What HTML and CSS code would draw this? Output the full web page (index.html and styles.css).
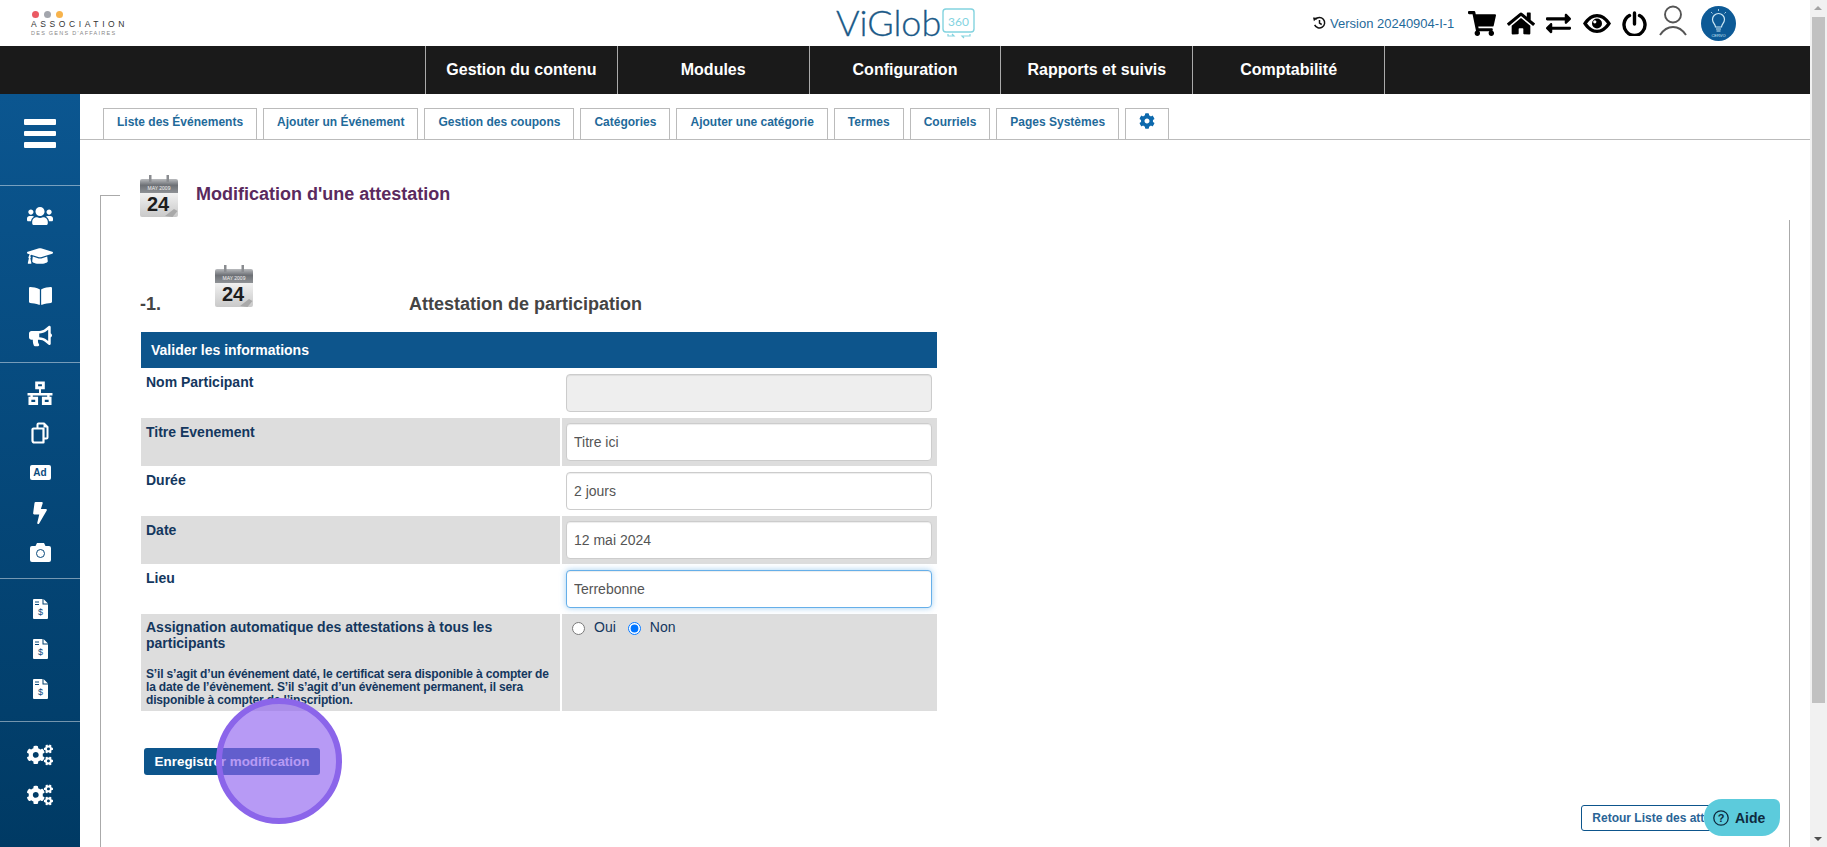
FILE: index.html
```html
<!DOCTYPE html>
<html lang="fr">
<head>
    <meta charset="UTF-8">
    <meta name="viewport" content="width=device-width, initial-scale=1.0">
    <title>Modification d'une attestation - ViGlob 360</title>
    <link rel="stylesheet" href="styles.css">
</head>
<body>

    <!-- Icon set -->
    <svg class="icon-defs" xmlns="http://www.w3.org/2000/svg">
        <defs>
            <linearGradient id="cal-head" x1="0" y1="0" x2="0" y2="1">
                <stop offset="0" stop-color="#b9bbbe"/>
                <stop offset=".45" stop-color="#6d7075"/>
                <stop offset="1" stop-color="#8f9296"/>
            </linearGradient>
            <linearGradient id="cal-body" x1="0" y1="0" x2="0" y2="1">
                <stop offset="0" stop-color="#f6f6f6"/>
                <stop offset="1" stop-color="#c9c9c9"/>
            </linearGradient>
        </defs>
        <symbol id="i-cart" viewBox="0 0 576 512"><path d="M528.12 301.319l47.273-208C578.806 78.301 567.391 64 551.99 64H159.208l-9.166-44.81C147.758 8.021 137.93 0 126.529 0H24C10.745 0 0 10.745 0 24v16c0 13.255 10.745 24 24 24h69.883l70.248 343.435C147.325 417.1 136 435.222 136 456c0 30.928 25.072 56 56 56s56-25.072 56-56c0-15.674-6.447-29.835-16.824-40h209.647C430.447 426.165 424 440.326 424 456c0 30.928 25.072 56 56 56s56-25.072 56-56c0-22.172-12.888-41.332-31.579-50.405l5.517-24.276c3.413-15.018-8.002-29.319-23.403-29.319H218.117l-6.545-32h293.145c11.206 0 20.92-7.754 23.403-18.681z"/></symbol>
        <symbol id="i-home" viewBox="0 0 576 512"><path d="M280.37 148.26L96 300.11V464a16 16 0 0 0 16 16l112.06-.29a16 16 0 0 0 15.92-16V368a16 16 0 0 1 16-16h64a16 16 0 0 1 16 16v95.64a16 16 0 0 0 16 16.05L464 480a16 16 0 0 0 16-16V300L295.67 148.26a12.19 12.19 0 0 0-15.3 0zM571.6 251.47L488 182.56V44.05a12 12 0 0 0-12-12h-56a12 12 0 0 0-12 12v72.61L318.47 43a48 48 0 0 0-61 0L4.34 251.47a12 12 0 0 0-1.6 16.9l25.5 31A12 12 0 0 0 45.15 301l235.22-193.74a12.19 12.19 0 0 1 15.3 0L530.9 301a12 12 0 0 0 16.9-1.6l25.5-31a12 12 0 0 0-1.7-16.93z"/></symbol>
        <symbol id="i-exchange" viewBox="0 0 512 512"><path d="M0 168v-16c0-13.255 10.745-24 24-24h360V80c0-21.367 25.899-32.042 40.971-16.971l80 80c9.372 9.373 9.372 24.569 0 33.941l-80 80C409.956 271.982 384 261.456 384 240v-48H24c-13.255 0-24-10.745-24-24zm488 152H128v-48c0-21.314-25.862-32.08-40.971-16.971l-80 80c-9.372 9.373-9.372 24.569 0 33.941l80 80C102.057 463.997 128 453.437 128 432v-48h360c13.255 0 24-10.745 24-24v-16c0-13.255-10.745-24-24-24z"/></symbol>
        <symbol id="i-users" viewBox="0 0 640 512"><path d="M96 224c35.3 0 64-28.7 64-64s-28.7-64-64-64-64 28.7-64 64 28.7 64 64 64zm448 0c35.3 0 64-28.7 64-64s-28.7-64-64-64-64 28.7-64 64 28.7 64 64 64zm32 32h-64c-17.6 0-33.5 7.1-45.1 18.6 40.3 22.1 68.9 62 75.1 109.4h66c17.7 0 32-14.3 32-32v-32c0-35.3-28.7-64-64-64zm-256 0c61.9 0 112-50.1 112-112S381.9 32 320 32 208 82.1 208 144s50.1 112 112 112zm76.8 32h-8.3c-20.8 10-43.9 16-68.5 16s-47.6-6-68.5-16h-8.3C179.6 288 128 339.6 128 403.2V432c0 26.5 21.5 48 48 48h288c26.5 0 48-21.5 48-48v-28.8c0-63.6-51.6-115.2-115.2-115.2zm-223.7-13.4C161.5 263.1 145.6 256 128 256H64c-35.3 0-64 28.7-64 64v32c0 17.7 14.3 32 32 32h65.9c6.3-47.4 34.9-87.3 75.2-109.4z"/></symbol>
        <symbol id="i-cap" viewBox="0 0 640 512"><path d="M622.34 153.2L343.4 67.5c-15.2-4.67-31.6-4.67-46.79 0L17.66 153.2c-23.54 7.23-23.54 38.36 0 45.59l48.63 14.94c-10.67 13.19-17.23 29.28-17.88 46.9C38.78 266.15 32 276.11 32 288c0 10.78 5.68 19.85 13.86 25.65L20.33 428.53C18.11 438.52 25.71 448 35.94 448h56.11c10.24 0 17.84-9.48 15.62-19.47L82.14 313.65C90.32 307.85 96 298.78 96 288c0-11.57-6.47-21.25-15.66-26.87.76-15.02 8.44-28.3 20.69-36.72L296.6 284.5c9.06 2.78 26.44 6.25 46.79 0l278.95-85.7c23.55-7.24 23.55-38.36 0-45.6zM352.79 315.09c-28.53 8.76-52.84 3.92-65.59 0l-145.02-44.55L128 384c0 35.35 85.96 64 192 64s192-28.65 192-64l-14.18-113.47-145.03 44.56z"/></symbol>
        <symbol id="i-book" viewBox="0 0 576 512"><path d="M542.22 32.05c-54.8 3.11-163.72 14.43-230.96 55.59-4.64 2.84-7.27 7.89-7.27 13.17v363.87c0 11.55 12.63 18.85 23.28 13.49 69.18-34.82 169.23-44.32 218.7-46.92 16.89-.89 30.02-14.43 30.02-30.66V62.75c.01-17.71-15.35-31.74-33.77-30.7zM264.73 87.64C197.5 46.48 88.58 35.17 33.78 32.05 15.36 31.01 0 45.04 0 62.75V400.6c0 16.24 13.13 29.78 30.02 30.66 49.49 2.6 149.59 12.11 218.77 46.95 10.62 5.35 23.21-1.94 23.21-13.46V100.63c0-5.29-2.62-10.14-7.27-12.99z"/></symbol>
        <symbol id="i-bullhorn" viewBox="0 0 576 512"><path d="M576 240c0-23.63-12.95-44.04-32-55.12V32.01C544 23.26 537.02 0 512 0c-7.12 0-14.19 2.38-19.98 7.02l-85.03 68.03C364.28 109.19 310.66 128 256 128H64c-35.35 0-64 28.65-64 64v96c0 35.35 28.65 64 64 64h33.7c-1.39 10.48-2.18 21.14-2.18 32 0 39.77 9.26 77.35 25.56 110.94 5.19 10.69 16.52 17.06 28.4 17.06h74.28c26.05 0 41.69-29.84 25.9-50.56-16.4-21.52-26.15-48.36-26.15-77.44 0-11.11 1.62-21.79 4.41-32H256c54.66 0 108.28 18.81 150.98 52.95l85.03 68.03a32.023 32.023 0 0 0 19.98 7.02c24.92 0 32-22.78 32-32V295.13C563.05 284.04 576 263.63 576 240zm-96 141.42l-33.05-26.44C392.95 311.78 325.12 288 256 288v-96c69.12 0 136.95-23.78 190.95-66.98L480 98.58v282.84z"/></symbol>
        <symbol id="i-bolt" viewBox="0 0 320 512"><path d="M296 160H180.6l42.6-129.8C227.2 15 215.7 0 200 0H56C44 0 33.8 8.9 32.2 20.8l-32 240C-1.7 275.2 9.5 288 24 288h118.7L96.6 482.5c-3.6 15.2 8 29.5 23.3 29.5 8.4 0 16.4-4.4 20.8-12l176-304c9.3-15.9-2.2-36-20.7-36z"/></symbol>
        <symbol id="i-cogs" viewBox="0 0 640 512"><path d="M512.1 191l-8.2 14.3c-3 5.3-9.4 7.5-15.1 5.4-11.8-4.4-22.6-10.7-32.1-18.6-4.6-3.8-5.8-10.5-2.8-15.7l8.2-14.3c-6.9-8-12.3-17.3-15.9-27.4h-16.5c-6 0-11.2-4.3-12.2-10.3-2-12-2.1-24.6 0-37.1 1-6 6.2-10.4 12.2-10.4h16.5c3.6-10.1 9-19.4 15.9-27.4l-8.2-14.3c-3-5.2-1.9-11.9 2.8-15.7 9.5-7.9 20.4-14.2 32.1-18.6 5.7-2.1 12.1.1 15.1 5.4l8.2 14.3c10.5-1.9 21.2-1.9 31.7 0L552 6.3c3-5.3 9.4-7.5 15.1-5.4 11.8 4.4 22.6 10.7 32.1 18.6 4.6 3.8 5.8 10.5 2.8 15.7l-8.2 14.3c6.9 8 12.3 17.3 15.9 27.4h16.5c6 0 11.2 4.3 12.2 10.3 2 12 2.1 24.6 0 37.1-1 6-6.2 10.4-12.2 10.4h-16.5c-3.6 10.1-9 19.4-15.9 27.4l8.2 14.3c3 5.2 1.9 11.9-2.8 15.7-9.5 7.9-20.4 14.2-32.1 18.6-5.7 2.1-12.1-.1-15.1-5.4l-8.2-14.3c-10.4 1.9-21.2 1.9-31.7 0zm-10.5-58.8c38.5 29.6 82.4-14.3 52.8-52.8-38.5-29.7-82.4 14.3-52.8 52.8zM386.3 286.1l33.7 16.8c10.1 5.8 14.5 18.1 10.5 29.1-8.9 24.2-26.4 46.4-42.6 65.8-7.4 8.9-20.2 11.1-30.3 5.3l-29.1-16.8c-16 13.7-34.6 24.6-54.9 31.7v33.6c0 11.6-8.3 21.6-19.7 23.6-24.6 4.2-50.4 4.4-75.9 0-11.5-2-20-11.9-20-23.6V418c-20.3-7.2-38.9-18-54.9-31.7L74 403c-10 5.8-22.9 3.6-30.3-5.3-16.2-19.4-33.3-41.6-42.2-65.7-4-10.9.4-23.2 10.5-29.1l33.3-16.8c-3.9-20.9-3.9-42.4 0-63.4L12 205.8c-10.1-5.8-14.6-18.1-10.5-29 8.9-24.2 26-46.4 42.2-65.8 7.4-8.9 20.2-11.1 30.3-5.3l29.1 16.8c16-13.7 34.6-24.6 54.9-31.7V57.1c0-11.5 8.2-21.5 19.6-23.5 24.6-4.2 50.5-4.4 76-.1 11.5 2 20 11.9 20 23.6v33.6c20.3 7.2 38.9 18 54.9 31.7l29.1-16.8c10-5.8 22.9-3.6 30.3 5.3 16.2 19.4 33.2 41.6 42.1 65.8 4 10.9.1 23.2-10 29.1l-33.7 16.8c3.9 21 3.9 42.5 0 63.5zm-117.6 21.1c59.2-77-28.7-164.9-105.7-105.7-59.2 77 28.7 164.9 105.7 105.7zm243.4 182.7l-8.2 14.3c-3 5.3-9.4 7.5-15.1 5.4-11.8-4.4-22.6-10.7-32.1-18.6-4.6-3.8-5.8-10.5-2.8-15.7l8.2-14.3c-6.9-8-12.3-17.3-15.9-27.4h-16.5c-6 0-11.2-4.3-12.2-10.3-2-12-2.1-24.6 0-37.1 1-6 6.2-10.4 12.2-10.4h16.5c3.6-10.1 9-19.4 15.9-27.4l-8.2-14.3c-3-5.2-1.9-11.9 2.8-15.7 9.5-7.9 20.4-14.2 32.1-18.6 5.7-2.1 12.1.1 15.1 5.4l8.2 14.3c10.5-1.9 21.2-1.9 31.7 0l8.2-14.3c3-5.3 9.4-7.5 15.1-5.4 11.8 4.4 22.6 10.7 32.1 18.6 4.6 3.8 5.8 10.5 2.8 15.7l-8.2 14.3c6.9 8 12.3 17.3 15.9 27.4h16.5c6 0 11.2 4.3 12.2 10.3 2 12 2.1 24.6 0 37.1-1 6-6.2 10.4-12.2 10.4h-16.5c-3.6 10.1-9 19.4-15.9 27.4l8.2 14.3c3 5.2 1.9 11.9-2.8 15.7-9.5 7.9-20.4 14.2-32.1 18.6-5.7 2.1-12.1-.1-15.1-5.4l-8.2-14.3c-10.4 1.9-21.2 1.9-31.7 0zM501.6 431c38.5 29.6 82.4-14.3 52.8-52.8-38.5-29.6-82.4 14.3-52.8 52.8z"/></symbol>
        <symbol id="i-cog" viewBox="0 0 512 512"><path d="M487.4 315.7l-42.6-24.6c4.3-23.2 4.3-47 0-70.2l42.6-24.6c4.9-2.8 7.1-8.6 5.5-14-11.1-35.6-30-67.8-54.7-94.6-3.8-4.1-10-5.1-14.8-2.3L380.8 110c-17.9-15.4-38.5-27.3-60.8-35.1V25.8c0-5.6-3.9-10.5-9.4-11.7-36.7-8.2-74.3-7.8-109.2 0-5.5 1.2-9.4 6.1-9.4 11.7V75c-22.2 7.9-42.8 19.8-60.8 35.1L88.7 85.5c-4.9-2.8-11-1.9-14.8 2.3-24.7 26.7-43.6 58.9-54.7 94.6-1.7 5.4.6 11.2 5.5 14L67.3 221c-4.3 23.2-4.3 47 0 70.2l-42.6 24.6c-4.9 2.8-7.1 8.6-5.5 14 11.1 35.6 30 67.8 54.7 94.6 3.8 4.1 10 5.1 14.8 2.3l42.6-24.6c17.9 15.4 38.5 27.3 60.8 35.1v49.2c0 5.6 3.9 10.5 9.4 11.7 36.7 8.2 74.3 7.8 109.2 0 5.5-1.2 9.4-6.1 9.4-11.7v-49.2c22.2-7.9 42.8-19.8 60.8-35.1l42.6 24.6c4.9 2.8 11 1.9 14.8-2.3 24.7-26.7 43.6-58.9 54.7-94.6 1.5-5.5-.7-11.3-5.6-14.1zM256 336c-44.1 0-80-35.9-80-80s35.9-80 80-80 80 35.9 80 80-35.9 80-80 80z"/></symbol>
        <symbol id="i-sitemap" viewBox="0 0 26 25">
            <path fill="none" stroke="currentColor" stroke-width="3" d="M9.500 2h7v5h-7zM2.500 18h7v5.500h-7zM16.500 18h7v5.500h-7z"/>
            <path d="M12 8h2v4.500h12v2.500H0v-2.500h12z"/>
            <path d="M3 14h2.500v3H3zM20.500 14H23v3h-2.500z"/>
        </symbol>
        <symbol id="i-copy" viewBox="0 0 18 22">
            <path fill="none" stroke="currentColor" stroke-width="2" stroke-linejoin="round" d="M6.500 6V2.500a1 1 0 0 1 1-1h5.500l3.500 3.500v10.500a1 1 0 0 1-1 1h-3"/>
            <path d="M12.500 1l4.500 4.500h-4.500z"/>
            <path fill="none" stroke="currentColor" stroke-width="2.200" stroke-linejoin="round" d="M2.500 6.500H12.500V20.500H3.500a2 2 0 0 1-2-2V7.500a1 1 0 0 1 1-1z"/>
        </symbol>
        <symbol id="i-camera" viewBox="0 0 21 19">
            <path d="M7 0h7l1.500 3H19a2 2 0 0 1 2 2v12a2 2 0 0 1-2 2H2a2 2 0 0 1-2-2V5a2 2 0 0 1 2-2h3.500z"/>
            <circle cx="10.500" cy="10.500" r="4" fill="none" stroke="#0a4a7c" stroke-width="1"/>
        </symbol>
        <symbol id="i-invoice" viewBox="0 0 15 20">
            <path d="M1 0h8.500v5.500H15V19a1 1 0 0 1-1 1H1a1 1 0 0 1-1-1V1a1 1 0 0 1 1-1zM10.500 0L15 4.500h-4.500z"/>
            <path fill="none" stroke="#0a4a7c" d="M2 3h4M2 5.500h4"/>
        </symbol>
        <symbol id="i-calendar" viewBox="0 0 38 42">
            <path fill="url(#cal-body)" d="M0 15h38v25a2 2 0 0 1-2 2H2a2 2 0 0 1-2-2z"/>
            <path fill="url(#cal-head)" d="M0 6a2 2 0 0 1 2-2h34a2 2 0 0 1 2 2v12H0z"/>
            <path fill="#8a8c90" d="M9 0h2.500v7H9zM26.500 0H29v7h-2.500z"/>
            <path fill="#a9a9a9" d="M25 41l9-7 3.500 2-5 6z"/>
        </symbol>
    </svg>

    <div class="page">
        <header class="topbar">
            <div class="assoc-logo">
                <div class="assoc-dots"><span class="dot-red"></span><span class="dot-grey"></span><span class="dot-orange"></span></div>
                <div class="assoc-name">ASSOCIATION</div>
                <div class="assoc-sub">DES GENS D'AFFAIRES</div>
            </div>

            <div class="viglob-logo">
                <span class="viglob-name">ViGlob</span>
                <svg class="viglob-box" viewBox="0 0 33 32">
                    <rect x="1" y="1" width="31" height="23" rx="3" fill="none" stroke="#83d3df" stroke-width="1.400"/>
                    <text x="16.500" y="18" text-anchor="middle" class="viglob-360">360</text>
                    <path fill="none" stroke="#83d3df" stroke-width="1.200" d="M6 26v2h6l-2-2M28 26v2h-8l2 2"/>
                </svg>
            </div>

            <div class="top-tools">
                <svg class="history" viewBox="0 0 14 14"><path fill="none" stroke="#111" stroke-width="1.600" d="M2.600 3.200A5.600 5.600 0 1 1 1.800 9M7 3.800V7.200L9.400 8.600"/><path fill="#111" d="M0 1l4.600.4L1 5z"/></svg>
                <span class="version">Version 20240904-I-1</span>
                <svg class="tool tool-cart"><use href="#i-cart"/></svg>
                <svg class="tool tool-home"><use href="#i-home"/></svg>
                <svg class="tool tool-exchange"><use href="#i-exchange"/></svg>
                <svg class="tool tool-eye" viewBox="0 0 28 19"><path fill-rule="evenodd" d="M0 9.500C4 3 9 0 14 0s10 3 14 9.500C24 16 19 19 14 19S4 16 0 9.500zM4 9.500C7 13.800 10.500 15.800 14 15.800S21 13.800 24 9.500C21 5.200 17.500 3.200 14 3.200S7 5.200 4 9.500z"/><circle cx="14" cy="9.500" r="5"/><circle cx="11.800" cy="7.800" r="1.600" fill="#fff"/></svg>
                <svg class="tool tool-power" viewBox="0 0 25 25"><path fill="none" stroke="#000" stroke-width="3.400" stroke-linecap="round" d="M7.500 4.600a10.500 10.500 0 1 0 10 0M12.500 2v11"/></svg>
                <svg class="tool tool-user" viewBox="0 0 28 31"><circle cx="14" cy="9.500" r="8" fill="none" stroke="#555" stroke-width="1.900"/><path fill="none" stroke="#555" stroke-width="1.900" d="M1 30c4-6 8-8 13-8s9 2 13 8"/></svg>
                <svg class="avatar" viewBox="0 0 35 35">
                    <circle cx="17.500" cy="17.500" r="17.500" fill="#0d5a96"/>
                    <path fill="none" stroke="#cfe9f5" stroke-width="1.200" d="M14.500 21c0-3-3-4-3-7.500a6 6 0 0 1 12 0c0 3.500-3 4.500-3 7.500zM15 23h5M15.500 25h4"/>
                    <path fill="none" stroke="#cfe9f5" stroke-width=".8" d="M17.500 3v2M10 6l1.500 1.500M25 6l-1.500 1.500"/>
                    <text x="17.500" y="31" text-anchor="middle" class="avatar-text">CERVO</text>
                </svg>
            </div>
        </header>

        <nav class="main-nav">
            <a href="#">Gestion du contenu</a>
            <a href="#">Modules</a>
            <a href="#">Configuration</a>
            <a href="#">Rapports et suivis</a>
            <a href="#">Comptabilité</a>
        </nav>

        <div class="layout">
            <aside class="sidebar">
                <div class="side-group side-menu">
                    <div class="burger"><span></span><span></span><span></span></div>
                </div>
                <div class="side-group group-a">
                    <a class="side-icon" href="#"><svg class="w26"><use href="#i-users"/></svg></a>
                    <a class="side-icon" href="#"><svg class="w26"><use href="#i-cap"/></svg></a>
                    <a class="side-icon" href="#"><svg class="w24"><use href="#i-book"/></svg></a>
                    <a class="side-icon" href="#"><svg class="w24"><use href="#i-bullhorn"/></svg></a>
                </div>
                <div class="side-group group-b">
                    <a class="side-icon" href="#"><svg class="w26"><use href="#i-sitemap"/></svg></a>
                    <a class="side-icon" href="#"><svg class="w18"><use href="#i-copy"/></svg></a>
                    <a class="side-icon" href="#"><span class="ad-badge">Ad</span></a>
                    <a class="side-icon" href="#"><svg class="w14"><use href="#i-bolt"/></svg></a>
                    <a class="side-icon" href="#"><svg class="w21"><use href="#i-camera"/></svg></a>
                </div>
                <div class="side-group group-c">
                    <a class="side-icon" href="#"><svg class="w15" viewBox="0 0 15 20"><use href="#i-invoice"/><text x="7.500" y="15.500" text-anchor="middle" class="invoice-sign">$</text></svg></a>
                    <a class="side-icon" href="#"><svg class="w15" viewBox="0 0 15 20"><use href="#i-invoice"/><text x="7.500" y="15.500" text-anchor="middle" class="invoice-sign">$</text></svg></a>
                    <a class="side-icon" href="#"><svg class="w15" viewBox="0 0 15 20"><use href="#i-invoice"/><text x="7.500" y="15.500" text-anchor="middle" class="invoice-sign">$</text></svg></a>
                </div>
                <div class="side-group group-d">
                    <a class="side-icon" href="#"><svg class="w26"><use href="#i-cogs"/></svg></a>
                    <a class="side-icon" href="#"><svg class="w26"><use href="#i-cogs"/></svg></a>
                </div>
            </aside>

            <main class="content">
                <div class="tabs">
                    <a class="tab" href="#">Liste des Événements</a>
                    <a class="tab" href="#">Ajouter un Événement</a>
                    <a class="tab" href="#">Gestion des coupons</a>
                    <a class="tab" href="#">Catégories</a>
                    <a class="tab" href="#">Ajouter une catégorie</a>
                    <a class="tab" href="#">Termes</a>
                    <a class="tab" href="#">Courriels</a>
                    <a class="tab" href="#">Pages Systèmes</a>
                    <a class="tab tab-cog" href="#"><svg class="cog"><use href="#i-cog"/></svg></a>
                </div>

                <section class="panel">
                    <div class="panel-legend">
                        <svg class="calendar" viewBox="0 0 38 42">
                            <use href="#i-calendar"/>
                            <text x="19" y="15" text-anchor="middle" class="cal-month">MAY 2009</text>
                            <text x="18" y="36" text-anchor="middle" class="cal-day">24</text>
                        </svg>
                        <h1>Modification d'une attestation</h1>
                    </div>

                    <div class="section-head">
                        <span class="section-num">-1.</span>
                        <svg class="calendar" viewBox="0 0 38 42">
                            <use href="#i-calendar"/>
                            <text x="19" y="15" text-anchor="middle" class="cal-month">MAY 2009</text>
                            <text x="18" y="36" text-anchor="middle" class="cal-day">24</text>
                        </svg>
                        <h2>Attestation de participation</h2>
                    </div>

                    <form class="att-form">
                        <div class="form-head">Valider les informations</div>

                        <div class="row">
                            <label class="row-label" for="nom">Nom Participant</label>
                            <div class="row-value"><input type="text" id="nom" disabled></div>
                        </div>
                        <div class="row row-alt">
                            <label class="row-label" for="titre">Titre Evenement</label>
                            <div class="row-value"><input type="text" id="titre" value="Titre ici"></div>
                        </div>
                        <div class="row">
                            <label class="row-label" for="duree">Durée</label>
                            <div class="row-value"><input type="text" id="duree" value="2 jours"></div>
                        </div>
                        <div class="row row-alt">
                            <label class="row-label" for="date">Date</label>
                            <div class="row-value"><input type="text" id="date" value="12 mai 2024"></div>
                        </div>
                        <div class="row">
                            <label class="row-label" for="lieu">Lieu</label>
                            <div class="row-value"><input type="text" id="lieu" class="is-focus" value="Terrebonne"></div>
                        </div>
                        <div class="row row-alt row-last">
                            <div class="row-label">
                                Assignation automatique des attestations à tous les participants
                                <p class="row-note">S’il s’agit d’un événement daté, le certificat sera disponible à compter de la date de l’évènement. S’il s’agit d’un évènement permanent, il sera disponible à compter de l’inscription.</p>
                            </div>
                            <div class="row-value radios">
                                <input type="radio" name="auto" id="oui"><label for="oui">Oui</label>
                                <input type="radio" name="auto" id="non" checked><label for="non">Non</label>
                            </div>
                        </div>

                        <button type="button" class="save-button">Enregistrer modification</button>
                    </form>

                    <div class="back-line">
                        <a class="back-button" href="#">Retour Liste des attestations</a>
                    </div>
                </section>
            </main>
        </div>
    </div>

    <div class="scrollbar">
        <span class="arrow-up"></span>
        <span class="thumb"></span>
        <span class="arrow-down"></span>
    </div>

    <!-- click marker and help bubble sit over the page -->
    <div class="click-marker"></div>
    <a class="help-bubble" href="#">
        <svg class="help-icon" viewBox="0 0 16 16"><circle cx="8" cy="8" r="7.200" fill="none" stroke="#0f2a3e" stroke-width="1.300"/><text x="8" y="11.500" text-anchor="middle" class="help-mark">?</text></svg>
        Aide
    </a>

</body>
</html>
```

FILE: styles.css
```css
/* --- General Setup --- */
:root {
    --blue: #0d558c;
    --label: #14375e;
    --link: #1f6a9a;
    --line: #bbb;
}

* {
    box-sizing: border-box;
}

html, body {
    height: 100%;
}

body {
    margin: 0;
    display: flex;
    overflow: hidden;
    position: relative;
    font-family: "Liberation Sans", Arial, sans-serif;
    background-color: #fff;
}

a {
    text-decoration: none;
}

.icon-defs {
    position: absolute;
    width: 0;
    height: 0;
}

.page {
    flex: 1;
    min-width: 0;
    display: flex;
    flex-direction: column;
}

/* --- Top Bar --- */
.topbar {
    height: 46px;
    flex: none;
    display: flex;
    align-items: flex-start;
    position: relative;
}

.assoc-logo {
    width: 836px;
    padding: 11px 0 0 31px;
    color: #333;
}

.assoc-dots {
    display: flex;
    gap: 5px;
    padding-left: 1px;
}

.assoc-dots span {
    width: 7px;
    height: 7px;
    border-radius: 50%;
}

.dot-red { background-color: #ea5a63; }
.dot-grey { background-color: #a3a6ad; }
.dot-orange { background-color: #f7b34c; }

.assoc-name {
    font-size: 8.5px;
    line-height: 10px;
    letter-spacing: 3.6px;
    margin-top: 1px;
}

.assoc-sub {
    font-size: 5.5px;
    line-height: 8px;
    letter-spacing: 1.25px;
    color: #888;
}

.viglob-logo {
    width: 477px;
    display: flex;
    align-items: flex-start;
    gap: 1px;
    padding-top: 4px;
}

.viglob-name {
    font-family: Lato, sans-serif;
    font-weight: 300;
    font-size: 36px;
    line-height: 36px;
    color: #1b5a88;
    -webkit-text-stroke: .3px #1b5a88;
}

.viglob-box {
    width: 33px;
    height: 32px;
    margin-top: 4px;
}

.viglob-360 {
    font-family: Lato, sans-serif;
    font-size: 12px;
    fill: #83d3df;
}

.top-tools {
    display: flex;
    align-items: center;
    height: 46px;
}

.history {
    width: 13px;
    height: 14px;
    margin-right: 4px;
}

.version {
    font-size: 13px;
    color: var(--link);
    width: 138px;
}

.tool {
    fill: #000;
    flex: none;
}

.tool-cart { width: 28px; height: 25px; margin-right: 11px; }
.tool-home { width: 28px; height: 25px; margin-right: 11px; }
.tool-exchange { width: 25px; height: 25px; margin-right: 12px; }
.tool-eye { width: 28px; height: 19px; margin-right: 11px; }
.tool-power { width: 25px; height: 25px; margin-right: 12px; }
.tool-user { width: 28px; height: 31px; margin: -6px 14px 0 0; }

.avatar {
    width: 35px;
    height: 35px;
}

.avatar-text {
    font-size: 4px;
    fill: #cfe9f5;
}

/* --- Black Nav --- */
.main-nav {
    height: 48px;
    flex: none;
    display: flex;
    padding-left: 425px;
    background-color: #1a1a1a;
}

.main-nav a {
    width: 191.8px;
    border-left: 1px solid #aaa;
    color: #fff;
    font-size: 16px;
    font-weight: bold;
    line-height: 47px;
    text-align: center;
}

.main-nav a:last-child {
    width: 192.8px;
    border-right: 1px solid #aaa;
}

/* --- Sidebar --- */
.layout {
    flex: 1;
    min-height: 0;
    display: flex;
}

.sidebar {
    width: 80px;
    flex: none;
    background-image: linear-gradient(to bottom, #0b5690, #003a64);
}

.side-group {
    padding: 10px 0 5.5px;
    border-bottom: 1.5px solid rgba(255, 255, 255, .45);
}

.side-menu {
    height: 92px;
    padding-top: 25px;
}

.group-c {
    padding-bottom: 11.5px;
}

.group-d {
    padding-top: 13px;
    border-bottom: none;
}

.burger {
    width: 32px;
    margin: 0 auto;
    display: flex;
    flex-direction: column;
    gap: 6px;
}

.burger span {
    height: 5.5px;
    border-radius: 1px;
    background-color: #fff;
}

.side-icon {
    height: 40px;
    display: flex;
    align-items: center;
    justify-content: center;
    color: #fff;
    fill: #fff;
}

.w26 { width: 26px; height: 24px; }
.w24 { width: 23px; height: 22px; }
.w21 { width: 21px; height: 19px; }
.w18 { width: 18px; height: 22px; }
.w15 { width: 15px; height: 20px; }
.w14 { width: 14px; height: 22px; }

.invoice-sign {
    font-size: 9px;
    fill: #0a4a7c;
}

.ad-badge {
    width: 21px;
    height: 15px;
    border-radius: 2px;
    background-color: #fff;
    color: #0a4a7c;
    font-size: 10px;
    font-weight: bold;
    line-height: 15px;
    text-align: center;
}

/* --- Tabs --- */
.content {
    flex: 1;
    min-width: 0;
    overflow: hidden;
}

.tabs {
    height: 46px;
    padding: 14px 0 0 23px;
    display: flex;
    gap: 6px;
    border-bottom: 1px solid var(--line);
}

.tab {
    height: 31px;
    padding: 0 13px;
    border: 1px solid var(--line);
    border-bottom: none;
    color: var(--link);
    font-size: 12px;
    font-weight: bold;
    line-height: 27px;
    white-space: nowrap;
}

.cog {
    width: 16px;
    height: 16px;
    fill: #0d69ad;
    margin-top: 4px;
}

.tab-cog {
    width: 44px;
    padding: 0 13px;
}

/* --- Panel --- */
.panel {
    display: flow-root;
    position: relative;
    margin: 55px 20px 0;
    height: 700px;
    border-left: 1px solid #aaa;
}

.panel::before {
    content: "";
    position: absolute;
    left: 0;
    top: 0;
    width: 19px;
    border-top: 1px solid #aaa;
}

.panel::after {
    content: "";
    position: absolute;
    right: 0;
    top: 25px;
    bottom: 0;
    border-right: 1px solid #aaa;
}

.calendar {
    width: 38px;
    height: 42px;
    flex: none;
}

.cal-month {
    font-size: 5px;
    fill: #f2f2f2;
}

.cal-day {
    font-size: 20px;
    font-weight: bold;
    fill: #1d1d1d;
}

.panel-legend {
    margin-top: -20px;
    padding: 0 0 0 39px;
    display: flex;
    align-items: flex-start;
    gap: 18px;
    position: relative;
    z-index: 1;
}

.panel-legend h1 {
    margin: 9px 0 0;
    font-size: 18px;
    line-height: 20px;
    font-weight: bold;
    color: #5a2a5e;
}

.section-head {
    height: 49px;
    margin-top: 48px;
    padding-left: 39px;
    display: flex;
}

.section-num, .section-head h2 {
    align-self: flex-end;
    margin: 0;
    font-size: 18px;
    font-weight: bold;
    line-height: 20px;
    color: #444;
}

.section-num {
    width: 75px;
}

.section-head h2 {
    margin-left: 156px;
}

/* --- Form --- */
.att-form {
    width: 796px;
    margin: 18px 0 0 40px;
}

.form-head {
    height: 36px;
    padding-left: 10px;
    background-color: var(--blue);
    color: #fff;
    font-size: 14px;
    font-weight: bold;
    line-height: 36px;
}

.row {
    display: grid;
    grid-template-columns: 421px 1fr;
    color: var(--label);
    font-size: 14px;
}

.row-label {
    padding: 6px 5px;
    border-right: 2px solid #fff;
    font-weight: bold;
    line-height: 16px;
}

.row-value {
    padding: 6px 5px 6px 4px;
}

.row-alt {
    background-color: #ddd;
}

.row-alt .row-value {
    padding: 5px 5px 5px 4px;
}

.row-note {
    margin: 17px 0 0;
    font-size: 12px;
    line-height: 13px;
    letter-spacing: -.16px;
}

.row-last .row-label {
    padding: 5px 5px 4px;
}

.row input[type="text"] {
    display: block;
    width: 100%;
    height: 38px;
    padding: 0 7px;
    border: 1px solid #ccc;
    border-radius: 4px;
    background-color: #fff;
    color: #555;
    font-family: inherit;
    font-size: 14px;
    box-shadow: inset 0 1px 1px rgba(0, 0, 0, .075);
}

.row input[disabled] {
    background-color: #eee;
}

.row input.is-focus {
    border-color: #66afe9;
    box-shadow: inset 0 1px 1px rgba(0, 0, 0, .075), 0 0 6px rgba(102, 175, 233, .6);
}

.row-alt .radios {
    display: flex;
    align-items: flex-start;
    padding-left: 10px;
    line-height: 16px;
    font-size: 14px;
}

.radios input {
    width: 13px;
    height: 13px;
    margin: 3px 0 0;
    flex: none;
}

.radios label {
    margin: 0 12px 0 9px;
}

.save-button {
    display: block;
    width: 176px;
    height: 27px;
    margin: 37px 0 0 3px;
    padding: 0;
    border: none;
    border-radius: 3px;
    background-color: var(--blue);
    color: #fff;
    font-family: inherit;
    font-size: 13.4px;
    font-weight: bold;
}

.back-line {
    display: flex;
    justify-content: flex-end;
    margin: 30px 22px 0 0;
}

.back-button {
    height: 26px;
    padding: 0 10px;
    border: 1px solid var(--blue);
    border-radius: 3px;
    color: #2a6496;
    font-size: 12px;
    font-weight: bold;
    line-height: 24px;
}

/* --- Scrollbar --- */
.scrollbar {
    width: 17px;
    flex: none;
    position: relative;
    background-color: #f1f1f1;
}

.thumb {
    position: absolute;
    left: 2px;
    right: 2px;
    top: 17px;
    height: 686px;
    background-color: #c1c1c1;
}

.arrow-up, .arrow-down {
    position: absolute;
    left: 4px;
    width: 0;
    height: 0;
    border-left: 4px solid transparent;
    border-right: 4px solid transparent;
}

.arrow-up {
    top: 6px;
    border-bottom: 4px solid #a3a3a3;
}

.arrow-down {
    bottom: 6px;
    border-top: 4px solid #505050;
}

/* --- Overlays --- */
.click-marker {
    position: absolute;
    left: 216px;
    top: 698px;
    width: 126px;
    height: 126px;
    border: 6px solid #8b65ea;
    border-radius: 50%;
    background-color: rgba(145, 100, 240, .65);
}

.help-bubble {
    position: absolute;
    left: 1704px;
    top: 799px;
    width: 76px;
    height: 37px;
    display: flex;
    align-items: center;
    gap: 6px;
    padding-left: 9px;
    border-radius: 18px 6px 18px 18px;
    background-color: #5ccbdc;
    color: #0f2a3e;
    font-size: 14px;
    font-weight: bold;
}

.help-icon {
    width: 16px;
    height: 16px;
}

.help-mark {
    font-size: 11px;
    font-weight: bold;
    fill: #0f2a3e;
}
```
